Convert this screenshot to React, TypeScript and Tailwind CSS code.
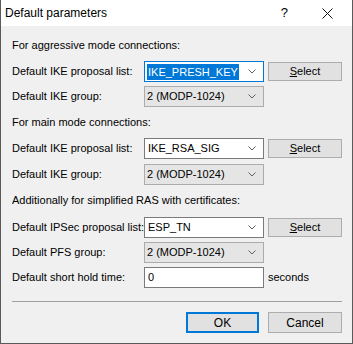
import React from 'react';

const font = { fontFamily: '"Liberation Sans", Arial, sans-serif' };

function Chevron() {
  return (
    <svg width="8" height="5" viewBox="0 0 8 5" className="shrink-0">
      <path d="M0.5 0.5 L4 4 L7.5 0.5" fill="none" stroke="#606060" strokeWidth="1" />
    </svg>
  );
}

type ComboProps = {
  value: string;
  kind: 'edit' | 'list' | 'focus';
};

function Combo({ value, kind }: ComboProps) {
  if (kind === 'list') {
    return (
      <div className="w-[120px] h-[21px] bg-[#e5e5e5] border border-[#acacac] flex items-center pl-[2px] pr-[7px] justify-between">
        <span>{value}</span>
        <Chevron />
      </div>
    );
  }
  return (
    <div
      className={
        'w-[120px] h-[21px] bg-white border flex items-center pl-[2px] pr-[7px] justify-between ' +
        (kind === 'focus' ? 'border-[#0078d7]' : 'border-[#7a7a7a]')
      }
    >
      {kind === 'focus' ? (
        <span className="bg-[#0078d7] text-white leading-[16px] px-[1px]">{value}</span>
      ) : (
        <span className="pl-[1px]">{value}</span>
      )}
      <Chevron />
    </div>
  );
}

function SelectButton() {
  return (
    <button className="ml-[4px] w-[74px] h-[19px] bg-[#e1e1e1] border border-[#adadad] flex items-center justify-center text-black">
      <span>
        <span className="underline">S</span>elect
      </span>
    </button>
  );
}

function Row({ label, children, className = '' }: { label: string; children: React.ReactNode; className?: string }) {
  return (
    <div className={'flex items-center h-[21px] ' + className}>
      <div className="w-[132px] shrink-0 whitespace-nowrap">{label}</div>
      {children}
    </div>
  );
}

export default function App() {
  return (
    <div
      className="w-[353px] h-[344px] bg-[#f0f0f0] border-l border-r border-b border-[#5a5a5a] flex flex-col text-[11px] text-black"
      style={font}
    >
      {/* Titelleiste */}
      <div className="h-[26px] bg-white flex items-center shrink-0">
        <span className="pl-[4px] text-[12px]">Default parameters</span>
        <span className="ml-auto mr-[34px] text-[13px]">?</span>
        <svg width="11" height="11" viewBox="0 0 11 11" className="mr-[19px]">
          <path d="M0.5 0.5 L10.5 10.5 M10.5 0.5 L0.5 10.5" stroke="#111" strokeWidth="1" />
        </svg>
      </div>

      <div className="pl-[11px] flex flex-col">
        <div className="mt-[11px] h-[16px] leading-[16px]">For aggressive mode connections:</div>
        <Row label="Default IKE proposal list:" className="mt-[8px]">
          <Combo value="IKE_PRESH_KEY" kind="focus" />
          <SelectButton />
        </Row>
        <Row label="Default IKE group:" className="mt-[4px]">
          <Combo value="2 (MODP-1024)" kind="list" />
        </Row>

        <div className="mt-[7px] h-[16px] leading-[16px]">For main mode connections:</div>
        <Row label="Default IKE proposal list:" className="mt-[8px]">
          <Combo value="IKE_RSA_SIG" kind="edit" />
          <SelectButton />
        </Row>
        <Row label="Default IKE group:" className="mt-[5px]">
          <Combo value="2 (MODP-1024)" kind="list" />
        </Row>

        <div className="mt-[7px] h-[16px] leading-[16px]">Additionally for simplified RAS with certificates:</div>
        <Row label="Default IPSec proposal list:" className="mt-[9px]">
          <Combo value="ESP_TN" kind="edit" />
          <SelectButton />
        </Row>
        <Row label="Default PFS group:" className="mt-[4px]">
          <Combo value="2 (MODP-1024)" kind="list" />
        </Row>
        <Row label="Default short hold time:" className="mt-[4px]">
          <div className="w-[120px] h-[21px] bg-white border border-[#7a7a7a] flex items-center pl-[3px]">0</div>
          <span className="ml-[4px]">seconds</span>
        </Row>

        {/* Trennlinie */}
        <div className="mt-[13px] w-[330px] h-[1px] bg-[#a0a0a0]" />
      </div>

      {/* Buttons */}
      <div className="mt-[10px] flex justify-end pr-[10px]">
        <button className="w-[73px] h-[21px] bg-[#e1e1e1] border-2 border-[#0078d7] text-[12px]">OK</button>
        <button className="ml-[9px] w-[74px] h-[21px] bg-[#e1e1e1] border border-[#adadad] text-[12px]">Cancel</button>
      </div>
    </div>
  );
}
